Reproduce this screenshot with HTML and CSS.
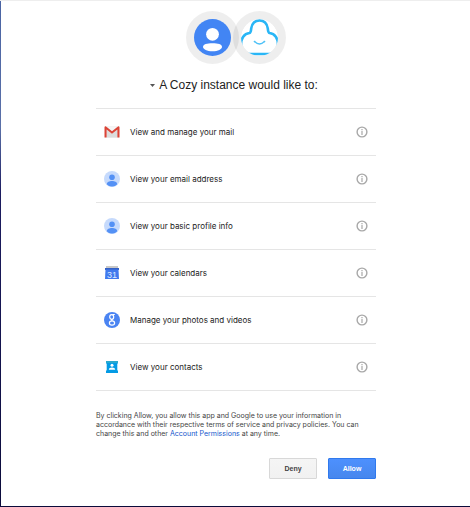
FILE: index.html
```html
<!DOCTYPE html>
<html lang="en">
<head>
<meta charset="utf-8">
<title>Permission request</title>
<link rel="stylesheet" href="styles.css">
</head>
<body>
<svg class="defs" aria-hidden="true">
  <defs>
    <clipPath id="face"><circle cx="8" cy="8" r="8"/></clipPath>
    <symbol id="person" viewBox="0 0 16 16">
      <circle cx="8" cy="8" r="8" fill="#c6dafc"/>
      <g clip-path="url(#face)" fill="#5491f5"><circle cx="8" cy="6.2" r="2.8"/><path d="M2.8 13.2c0-2.2 2.6-3.2 5.2-3.2s5.2 1 5.2 3.2C12 14.9 10 15.6 8 15.6s-4-.7-5.2-2.4z"/></g>
    </symbol>
    <symbol id="info" viewBox="0 0 12 12">
      <circle cx="6" cy="6" r="4.9" fill="none" stroke="#a8a8a8" stroke-width="1.4"/>
      <path d="M5.4 3h1.2v1.2H5.4zM5.4 5h1.2v4H5.4z" fill="#a8a8a8"/>
    </symbol>
  </defs>
</svg>
<main class="page">
  <div class="consent">
    <div class="avatars">
      <div class="avatar">
        <svg viewBox="0 0 37 37" aria-hidden="true">
          <circle cx="18.5" cy="18.5" r="18.5" fill="#4285f4"/>
          <circle cx="18.5" cy="15.3" r="6.4" fill="#fff"/>
          <path d="M9 28c0-2.8 4-3.7 9.5-3.7s9.5.9 9.5 3.7c0 2-4 4.3-9.5 4.3S9 30 9 28z" fill="#fff"/>
        </svg>
      </div>
      <div class="avatar">
        <svg viewBox="0 0 37 37" aria-hidden="true">
          <defs><clipPath id="logo"><circle cx="18.5" cy="18.5" r="18.5"/></clipPath></defs>
          <g clip-path="url(#logo)">
            <circle cx="18.5" cy="18.5" r="18.5" fill="#fff"/>
            <path d="M8 35C2.500 35 0 30.500 0 25.500 0 19.500 3 14.500 8.500 14 10 13.500 10 11.500 10.200 9.500 11 4.500 14 1.500 18.500 1.500S26 4.500 26.800 9.500C27 11.500 27 13.500 28.500 14 34 14.500 37 19.500 37 25.500 37 30.500 34.500 35 29 35z" fill="none" stroke="#29b6f6" stroke-width="2.600"/>
            <path d="M13.600 22.500q4.900 5 9.800 0M12.800 23l1.500-1M24.200 23l-1.500-1" fill="none" stroke="#4dc1f7" stroke-width="1.300"/>
          </g>
        </svg>
      </div>
    </div>
    <h1 class="title"><svg class="caret" viewBox="0 0 5 3" aria-hidden="true"><path d="M0 0h5L2.500 3z"/></svg>A Cozy instance would like to:</h1>
    <ul class="scopes">
      <li class="scope">
        <svg class="icon" viewBox="0 0 16 16" aria-hidden="true"><path d="M1 2.500h14v11H1z" fill="#e6e6e6"/><path d="M3 6l5 4 5-4v7.500H3z" fill="#dcdcdc"/><path d="M3 3l5 5 5-5z" fill="#f5f5f5"/><path d="M.5 13.500V3.300Q.5 2.300 1.700 2.300L8 7.300l6.300-5q1.200 0 1.200 1v10.200h-2.100V5.600L8 9.700 2.600 5.600v7.900z" fill="#db4437"/></svg>
        <span class="label">View and manage your mail</span>
        <button class="info" type="button" aria-label="More info"><svg><use href="#info"/></svg></button>
      </li>
      <li class="scope">
        <svg class="icon" aria-hidden="true"><use href="#person"/></svg>
        <span class="label">View your email address</span>
        <button class="info" type="button" aria-label="More info"><svg><use href="#info"/></svg></button>
      </li>
      <li class="scope">
        <svg class="icon" aria-hidden="true"><use href="#person"/></svg>
        <span class="label">View your basic profile info</span>
        <button class="info" type="button" aria-label="More info"><svg><use href="#info"/></svg></button>
      </li>
      <li class="scope">
        <svg class="icon" viewBox="0 0 16 16" aria-hidden="true"><path d="M2 1h12v3H2z" fill="#c8c8c8"/><path d="M1 3h14v2H1z" fill="#3460c4"/><path d="M1.500 4.500h13L15 14H1z" fill="#4079ee"/><text x="8" y="12.500" class="day">31</text></svg>
        <span class="label">View your calendars</span>
        <button class="info" type="button" aria-label="More info"><svg><use href="#info"/></svg></button>
      </li>
      <li class="scope">
        <svg class="icon" viewBox="0 0 16 16" aria-hidden="true"><circle cx="8" cy="8" r="8" fill="#4a84f2"/><g fill="none" stroke="#fff" stroke-width="1.200"><ellipse cx="7.700" cy="5" rx="2" ry="2.300"/><path d="M8.500 2.500h2.300M8.300 7.200q-1 .8 0 1.500"/><ellipse cx="8" cy="11" rx="2.600" ry="2.100"/></g></svg>
        <span class="label">Manage your photos and videos</span>
        <button class="info" type="button" aria-label="More info"><svg><use href="#info"/></svg></button>
      </li>
      <li class="scope">
        <svg class="icon" viewBox="0 0 16 16" aria-hidden="true"><path d="M2 2h12v2l-.7 1v6l.7 1v2H2v-2l.7-1V5L2 4z" fill="#039be5"/><path d="M2 2h12v2H2z" fill="#29a9ce"/><circle cx="8" cy="6.300" r="1.500" fill="#fff"/><path d="M4.800 10.800c0-3 6.400-3 6.400 0z" fill="#fff"/></svg>
        <span class="label">View your contacts</span>
        <button class="info" type="button" aria-label="More info"><svg><use href="#info"/></svg></button>
      </li>
    </ul>
    <p class="terms">By clicking Allow, you allow this app and Google to use your information in accordance with their respective terms of service and privacy policies. You can change this and other <a href="#permissions">Account Permissions</a> at any time.</p>
    <div class="actions">
      <button class="btn" type="button">Deny</button>
      <button class="btn primary" type="button">Allow</button>
    </div>
  </div>
</main>
</body>
</html>
```
FILE: styles.css
```css
* { box-sizing: border-box; }

body {
  margin: 0;
  background: #fff;
  color: #222;
  font-family: Inter, "Liberation Sans", Arial, sans-serif;
}

.defs { position: absolute; width: 0; height: 0; }

.page {
  min-height: 100vh;
  padding: 10px 0 0 2px;
  border-top: 1px solid #eee;
  border-bottom: 1px solid #0b0b3b;
  background: linear-gradient(#4a64a4, #5a70a8 25%, #1c1c60 38%, #0b0b3b) left / 1px 100% no-repeat;
}

.consent {
  max-width: 280px;
  margin: 0 auto;
}

.avatars { display: flex; justify-content: center; }

.avatar {
  width: 53px;
  height: 53px;
  padding: 8px;
  border-radius: 50%;
  background: rgba(0, 0, 0, 0.065);
}

.avatar + .avatar { margin-left: -6px; }
.avatar svg { display: block; width: 37px; height: 37px; }

.title {
  display: flex;
  align-items: center;
  justify-content: center;
  gap: 4px;
  margin: 14px 4px 15px 0;
  font-family: "Liberation Sans", Arial, sans-serif;
  font-size: 12px;
  font-weight: 400;
  line-height: 15px;
}

.caret { width: 5px; height: 3px; fill: #555; }

.scopes {
  margin: 0;
  padding: 0;
  list-style: none;
  border-top: 1px solid #e5e5e5;
}

.scope {
  display: flex;
  align-items: center;
  height: 47px;
  padding: 0 8px;
  border-bottom: 1px solid #e5e5e5;
}

.icon { width: 16px; height: 16px; margin-right: 10px; }

.day {
  fill: #dbe7ff;
  font-family: "Liberation Sans", Arial, sans-serif;
  font-size: 9px;
  text-anchor: middle;
}

.label { flex: 1; font-size: 8px; line-height: 12px; }

.info {
  width: 12px;
  height: 12px;
  padding: 0;
  border: 0;
  background: none;
}

.info svg { display: block; width: 12px; height: 12px; }

.terms {
  margin: 20px 0 0;
  color: #444;
  font-size: 7px;
  line-height: 9px;
}

.terms a { color: #15c; text-decoration: none; }

.actions {
  display: flex;
  justify-content: flex-end;
  gap: 11px;
  margin-top: 20px;
}

.btn {
  width: 48px;
  height: 21px;
  padding: 0;
  border: 1px solid #d8d8d8;
  border-radius: 1px;
  background: linear-gradient(#f5f5f5, #f1f1f1);
  color: #444;
  font: bold 7px "Liberation Sans", Arial, sans-serif;
}

.primary {
  border-color: #3079ed;
  background: linear-gradient(#4d90fe, #4787ed);
  color: #fff;
}
```
